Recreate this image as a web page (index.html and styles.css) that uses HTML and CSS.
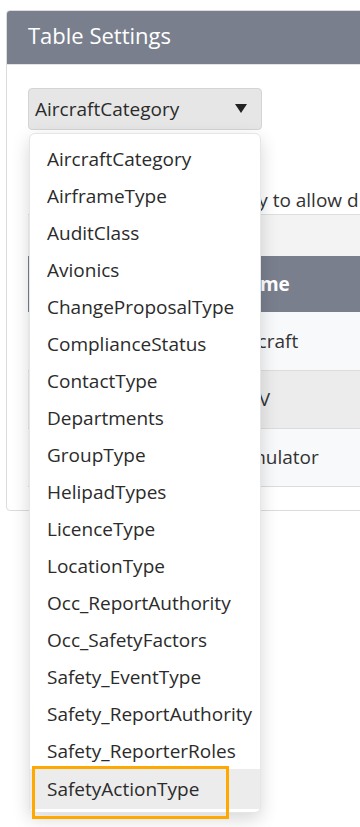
FILE: index.html
```html
<!DOCTYPE html>
<html lang="en">
<head>
    <meta charset="UTF-8">
    <meta name="viewport" content="width=device-width, initial-scale=1.0">
    <title>Table Settings</title>
    <link rel="stylesheet" href="styles.css">
</head>
<body>
    <div class="card">
        <div class="card-header">Table Settings</div>
        <div class="card-body">
            <div class="picker">
                <div class="select">
                    <span>AircraftCategory</span>
                    <svg class="caret" width="12" height="9" viewBox="0 0 12 9"><polygon points="0,0 12,0 6,9" fill="#222"/></svg>
                </div>
                <ul class="options">
                    <li>AircraftCategory</li>
                    <li>AirframeType</li>
                    <li>AuditClass</li>
                    <li>Avionics</li>
                    <li>ChangeProposalType</li>
                    <li>ComplianceStatus</li>
                    <li>ContactType</li>
                    <li>Departments</li>
                    <li>GroupType</li>
                    <li>HelipadTypes</li>
                    <li>LicenceType</li>
                    <li>LocationType</li>
                    <li>Occ_ReportAuthority</li>
                    <li>Occ_SafetyFactors</li>
                    <li>Safety_EventType</li>
                    <li>Safety_ReportAuthority</li>
                    <li>Safety_ReporterRoles</li>
                    <li class="active">SafetyActionType</li>
                </ul>
            </div>
            <p class="hint">Preset the orders manually to allow drag and drop</p>
            <div class="toolbar"></div>
            <table class="grid">
                <thead>
                    <tr><th class="handle"></th><th>Name</th></tr>
                </thead>
                <tbody>
                    <tr><td class="handle"></td><td>Aircraft</td></tr>
                    <tr class="alt"><td class="handle"></td><td>UAV</td></tr>
                    <tr><td class="handle"></td><td>Simulator</td></tr>
                </tbody>
            </table>
        </div>
    </div>
</body>
</html>
```
FILE: styles.css
```css
* {
    margin: 0;
    padding: 0;
    box-sizing: border-box;
}

body {
    font-family: 'Open Sans', 'Noto Sans', sans-serif;
    background-color: #fff;
    color: #333;
    padding: 10px 0 0 6px;
    overflow: hidden;
    height: 827px;
}

.card {
    width: 620px;
    border: 1px solid #dcdcdc;
    border-radius: 4px;
    background-color: #fff;
}

.card-header {
    background-color: #7a7f8e;
    color: #fff;
    font-size: 22px;
    height: 54px;
    line-height: 49px;
    padding-left: 21px;
    border-radius: 3px 3px 0 0;
    border-bottom: 1px solid #e4e4e4;
}

.card-body {
    padding: 23px 21px 23px 21px;
}

.picker {
    position: relative;
    width: 234px;
}

.select {
    height: 42px;
    background-color: #e6e6e6;
    border: 1px solid #d4d4d4;
    border-radius: 4px;
    display: flex;
    align-items: center;
    justify-content: space-between;
    padding: 0 14px 0 6px;
    font-size: 19px;
    color: #2b2b2b;
}

.caret {
    margin-top: -2px;
}

.options {
    position: absolute;
    top: 45px;
    left: 1px;
    width: 232px;
    list-style: none;
    background-color: #fff;
    border: 1px solid #e6e6e6;
    border-radius: 6px;
    box-shadow: 0 6px 18px rgba(0, 0, 0, 0.16);
    padding: 7px 0 3px;
    z-index: 2;
}

.options li {
    height: 37px;
    line-height: 37px;
    padding-left: 17px;
    font-size: 19px;
    color: #2b2b2b;
    white-space: nowrap;
}

.options li.active {
    position: relative;
    background-color: #ececec;
    margin-top: -1px;
    height: 40px;
    line-height: 40px;
}

.options li.active::after {
    content: '';
    position: absolute;
    left: 2px;
    top: -3px;
    width: 191px;
    height: 47px;
    border: 3px solid #ffa800;
}

.hint {
    margin-top: 58px;
    font-size: 19px;
    white-space: nowrap;
    color: #333;
    line-height: 24px;
}

.toolbar {
    margin-top: 2px;
    height: 42px;
    background-color: #f3f3f3;
    border-top: 1px solid #dedede;
}

.grid {
    width: 100%;
    border-collapse: collapse;
    font-size: 19px;
}

.grid th {
    background-color: #7a7f8e;
    color: #fff;
    font-weight: bold;
    text-align: left;
    height: 56px;
    padding: 0 12px;
}

.grid td {
    height: 58px;
    padding: 0 12px;
    background-color: #f8f9fb;
    border-bottom: 1px solid #dcdcdc;
}

.grid tr.alt td {
    background-color: #ececec;
}

.grid .handle {
    width: 193px;
}
```
